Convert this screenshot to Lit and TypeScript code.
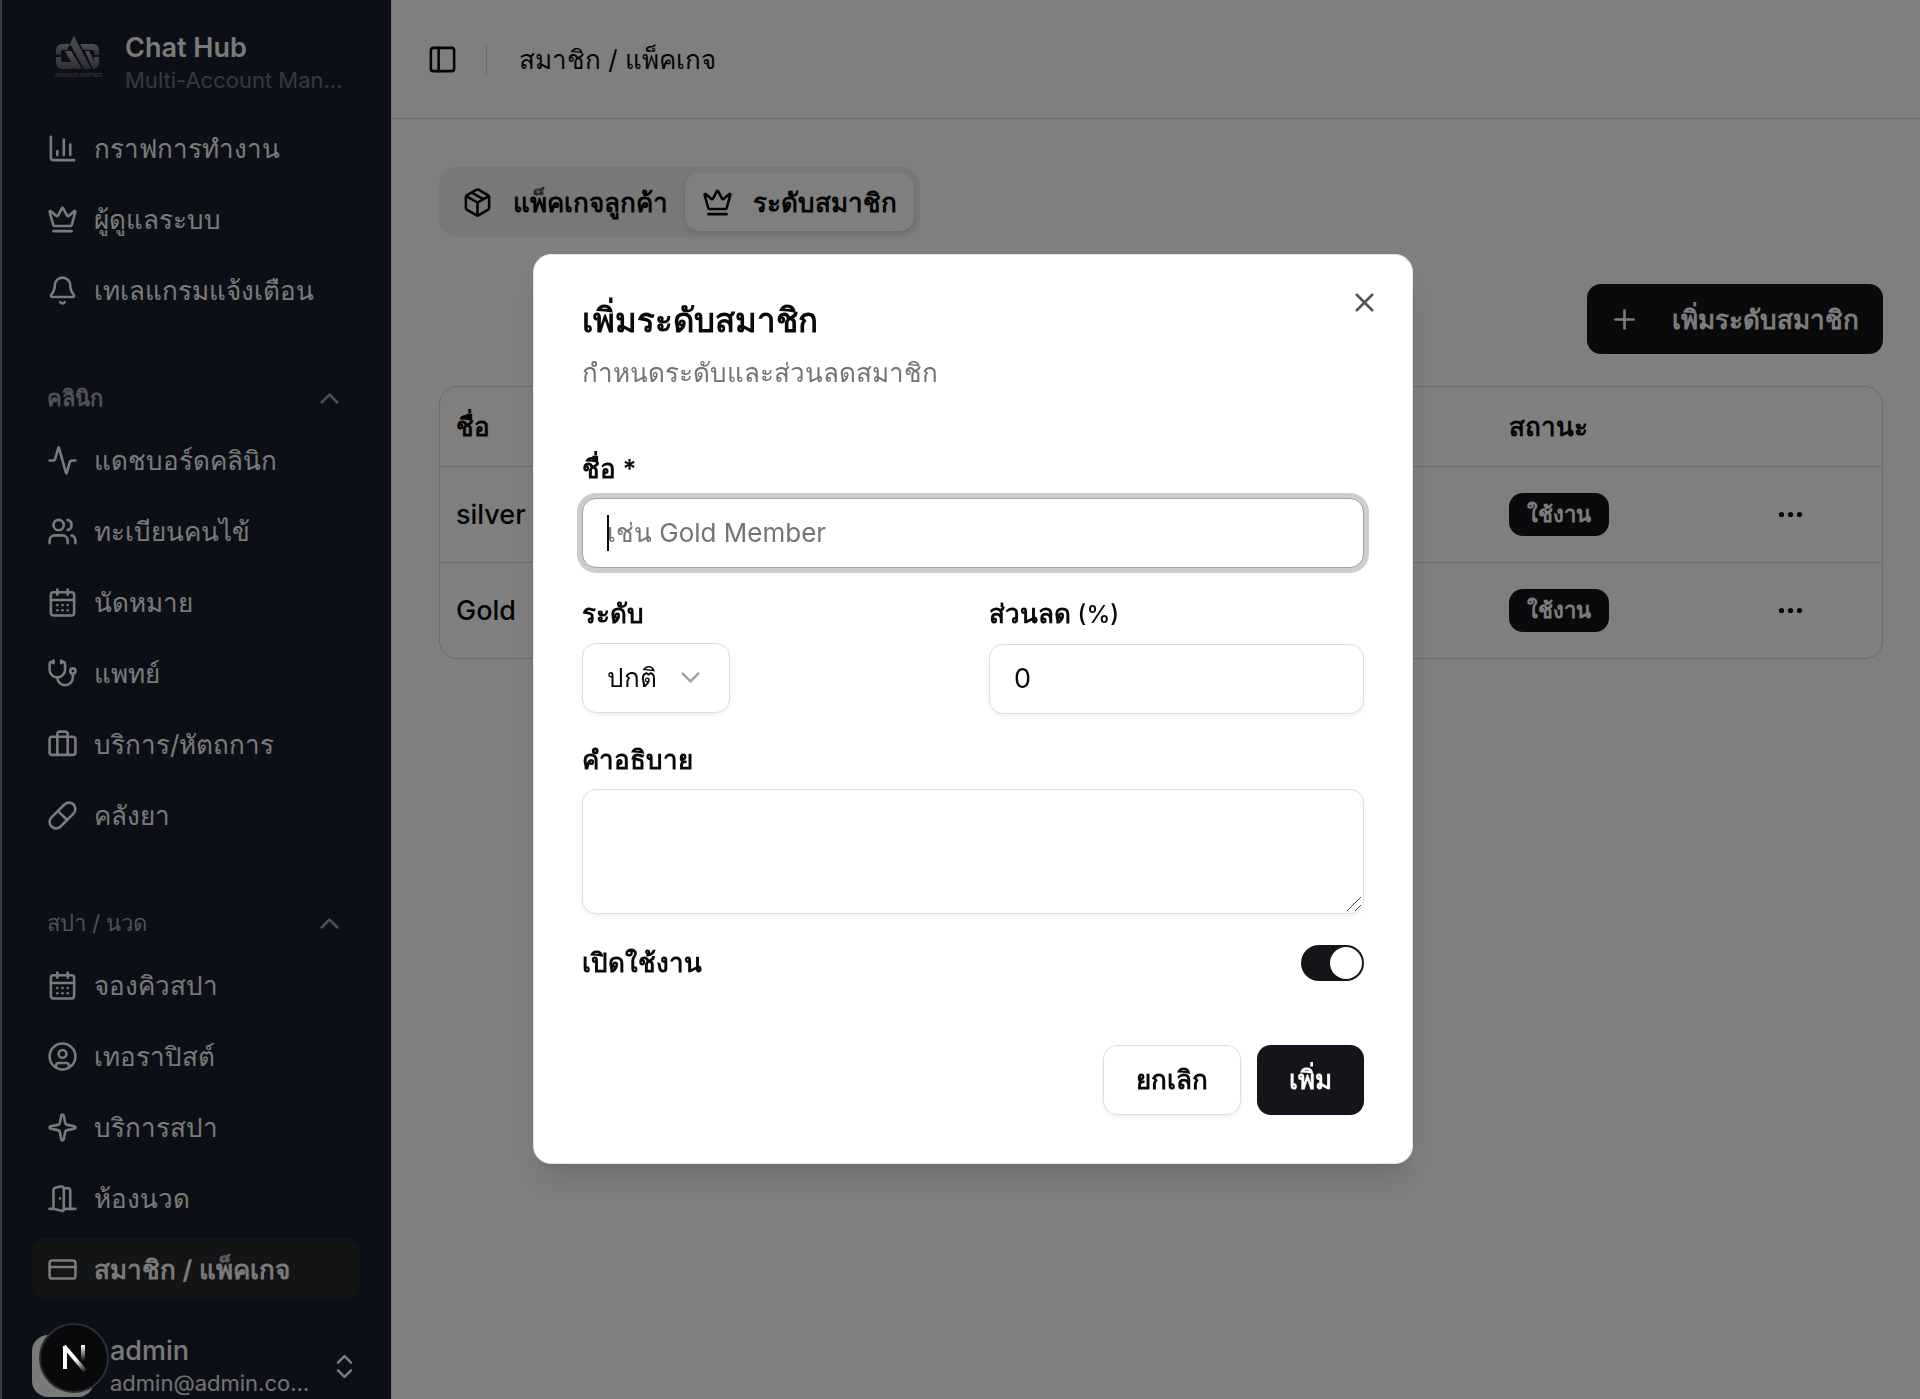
import { LitElement, html, css, svg } from "lit";
import { customElement, property, query, state } from "lit/decorators.js";
import { classMap } from "lit/directives/class-map.js";

const icons = {
  chart: svg`<path d="M3 3v16a2 2 0 0 0 2 2h16"/><path d="M13 17V5"/><path d="M18 17V9"/><path d="M8 17v-3"/>`,
  crown: svg`<path d="M11.562 3.266a.5.5 0 0 1 .876 0L15.39 8.87a1 1 0 0 0 1.516.294L21.183 5.5a.5.5 0 0 1 .798.519l-2.834 10.246a1 1 0 0 1-.956.734H5.81a1 1 0 0 1-.957-.734L2.02 6.02a.5.5 0 0 1 .798-.519l4.276 3.664a1 1 0 0 0 1.516-.294z"/><path d="M5 21h14"/>`,
  bell: svg`<path d="M10.268 21a2 2 0 0 0 3.464 0"/><path d="M3.262 15.326A1 1 0 0 0 4 17h16a1 1 0 0 0 .74-1.673C19.41 13.956 18 12.499 18 8A6 6 0 0 0 6 8c0 4.499-1.411 5.956-2.738 7.326"/>`,
  activity: svg`<path d="M22 12h-2.48a2 2 0 0 0-1.93 1.46l-2.35 8.36a.25.25 0 0 1-.48 0L9.24 2.18a.25.25 0 0 0-.48 0l-2.35 8.36A2 2 0 0 1 4.49 12H2"/>`,
  users: svg`<path d="M16 21v-2a4 4 0 0 0-4-4H6a4 4 0 0 0-4 4v2"/><path d="M16 3.128a4 4 0 0 1 0 7.744"/><path d="M22 21v-2a4 4 0 0 0-3-3.87"/><circle cx="9" cy="7" r="4"/>`,
  calendar: svg`<path d="M8 2v4"/><path d="M16 2v4"/><rect width="18" height="18" x="3" y="4" rx="2"/><path d="M3 10h18"/><path d="M8 14h.01"/><path d="M12 14h.01"/><path d="M16 14h.01"/><path d="M8 18h.01"/><path d="M12 18h.01"/><path d="M16 18h.01"/>`,
  stethoscope: svg`<path d="M11 2v2"/><path d="M5 2v2"/><path d="M5 3H4a2 2 0 0 0-2 2v4a6 6 0 0 0 12 0V5a2 2 0 0 0-2-2h-1"/><path d="M8 15a6 6 0 0 0 12 0v-3"/><circle cx="20" cy="10" r="2"/>`,
  luggage: svg`<path d="M16 20V4a2 2 0 0 0-2-2h-4a2 2 0 0 0-2 2v16"/><rect width="20" height="14" x="2" y="6" rx="2"/>`,
  pill: svg`<path d="m10.5 20.5 10-10a4.95 4.95 0 1 0-7-7l-10 10a4.95 4.95 0 1 0 7 7Z"/><path d="m8.5 8.5 7 7"/>`,
  userRound: svg`<circle cx="12" cy="12" r="10"/><circle cx="12" cy="10" r="3"/><path d="M7 20.662V19a2 2 0 0 1 2-2h6a2 2 0 0 1 2 2v1.662"/>`,
  sparkle: svg`<path d="M11.017 2.814a1 1 0 0 1 1.966 0l1.051 5.558a2 2 0 0 0 1.594 1.594l5.558 1.051a1 1 0 0 1 0 1.966l-5.558 1.051a2 2 0 0 0-1.594 1.594l-1.051 5.558a1 1 0 0 1-1.966 0l-1.051-5.558a2 2 0 0 0-1.594-1.594l-5.558-1.051a1 1 0 0 1 0-1.966l5.558-1.051a2 2 0 0 0 1.594-1.594z"/>`,
  door: svg`<path d="M13 4h3a2 2 0 0 1 2 2v14"/><path d="M2 20h3"/><path d="M13 20h9"/><path d="M10 12v.01"/><path d="M13 4.562v16.157a1 1 0 0 1-1.242.97L5 20V5.562a2 2 0 0 1 1.515-1.94l4-1A2 2 0 0 1 13 4.561Z"/>`,
  card: svg`<rect width="20" height="14" x="2" y="5" rx="2"/><path d="M2 10h20"/>`,
  up: svg`<path d="m18 15-6-6-6 6"/>`,
  down: svg`<path d="m6 9 6 6 6-6"/>`,
  updown: svg`<path d="m7 15 5 5 5-5"/><path d="m7 9 5-5 5 5"/>`,
  panel: svg`<rect width="18" height="18" x="3" y="3" rx="2"/><path d="M9 3v18"/>`,
  box: svg`<path d="M11 21.73a2 2 0 0 0 2 0l7-4A2 2 0 0 0 21 16V8a2 2 0 0 0-1-1.73l-7-4a2 2 0 0 0-2 0l-7 4A2 2 0 0 0 3 8v8a2 2 0 0 0 1 1.73z"/><path d="M12 22V12"/><path d="M3.29 7 12 12l8.71-5"/><path d="m7.5 4.27 9 5.15"/>`,
  plus: svg`<path d="M5 12h14"/><path d="M12 5v14"/>`,
  dots: svg`<circle cx="12" cy="12" r="1"/><circle cx="19" cy="12" r="1"/><circle cx="5" cy="12" r="1"/>`,
  close: svg`<path d="M18 6 6 18"/><path d="m6 6 12 12"/>`,
};
type IconName = keyof typeof icons;

@customElement("ui-icon")
class UiIcon extends LitElement {
  static styles = css`
    :host { display: inline-flex; width: 31px; height: 31px; flex: none; }
    svg { width: 100%; height: 100%; fill: none; stroke: currentColor; stroke-width: 2; stroke-linecap: round; stroke-linejoin: round; }
  `;
  @property() name: IconName = "plus";
  render() {
    return html`<svg viewBox="0 0 24 24" aria-hidden="true">${icons[this.name]}</svg>`;
  }
}

const base = css`
  *, *::before, *::after { box-sizing: border-box; }
  button, input, select, textarea { font: inherit; color: inherit; margin: 0; }
  button { border: 0; background: none; padding: 0; cursor: pointer; }
  a { color: inherit; text-decoration: none; }
`;

interface NavItem { icon: IconName; label: string; active?: boolean }
interface NavGroup { title?: string; strong?: boolean; items: NavItem[] }

const groups: NavGroup[] = [
  {
    items: [
      { icon: "chart", label: "กราฟการทำงาน" },
      { icon: "crown", label: "ผู้ดูแลระบบ" },
      { icon: "bell", label: "เทเลแกรมแจ้งเตือน" },
    ],
  },
  {
    title: "คลินิก",
    strong: true,
    items: [
      { icon: "activity", label: "แดชบอร์ดคลินิก" },
      { icon: "users", label: "ทะเบียนคนไข้" },
      { icon: "calendar", label: "นัดหมาย" },
      { icon: "stethoscope", label: "แพทย์" },
      { icon: "luggage", label: "บริการ/หัตถการ" },
      { icon: "pill", label: "คลังยา" },
    ],
  },
  {
    title: "สปา / นวด",
    items: [
      { icon: "calendar", label: "จองคิวสปา" },
      { icon: "userRound", label: "เทอราปิสต์" },
      { icon: "sparkle", label: "บริการสปา" },
      { icon: "door", label: "ห้องนวด" },
      { icon: "card", label: "สมาชิก / แพ็คเกจ", active: true },
    ],
  },
];

@customElement("app-sidebar")
class AppSidebar extends LitElement {
  static styles = [base, css`
    :host { display: flex; flex-direction: column; overflow: hidden; background: #181e2f; color: #f4f4f5; border-left: 2px solid #7c7c7c; }
    .brand { display: flex; align-items: center; gap: 15px; padding: 31px 30px 22px 46px; }
    .logo { width: 62px; height: 62px; flex: none; padding: 2px 8px 0 4px; }
    .text { min-width: 0; flex: 1; }
    .name, .sub { display: block; white-space: nowrap; }
    .name { font-size: 27px; line-height: 34px; font-weight: 600; }
    .sub { font-size: 22px; line-height: 30px; color: #71717a; }
    .group { padding: 0 31px 0 30px; margin-bottom: 46px; }
    .head { display: flex; width: 100%; align-items: center; justify-content: space-between; height: 62px; padding: 0 15px; font-size: 22px; color: #a1a1aa; }
    .strong { font-weight: 600; }
    .list { list-style: none; margin: 0; padding: 0; display: flex; flex-direction: column; gap: 9px; }
    .item { display: flex; align-items: center; gap: 16px; height: 62px; padding: 0 15px; border-radius: 14px; font-size: 26px; white-space: nowrap; }
    .item.active { background: #27282c; font-weight: 600; }
    .user { display: flex; align-items: center; width: 100%; gap: 16px; padding: 0 31px 0 30px; margin-top: -12px; text-align: left; flex: none; }
    .avatar { width: 62px; height: 62px; border-radius: 16px; background: #f4f4f5; flex: none; }
    .user .name { font-weight: 500; }
    .user .sub { color: #e4e4e7; }
  `];

  private logo() {
    return html`<svg class="logo" viewBox="0 0 50 58" role="img" aria-label="Advisor Partner">
      <defs><linearGradient id="m" x1="0" y1="0" x2="0" y2="1">
        <stop offset="0" stop-color="#a0a0a6"/><stop offset="1" stop-color="#5c5c64"/></linearGradient></defs>
      <g fill="url(#m)">
        <path d="M4 20v-5a6 6 0 0 1 6-6h8l-3 6h-4a2 2 0 0 0-2 2v3z"/>
        <path d="M4 22h5v3a2 2 0 0 0 2 2h8L13 16h6l11 18H10a6 6 0 0 1-6-6z"/>
        <path d="M22 1 18 9l14 25h7l-3-6z"/>
        <path d="M28 9h13a6 6 0 0 1 6 6v5h-5v-3a2 2 0 0 0-2-2h-9z"/>
        <path d="M33 16h4l5 10v-4h5v6a6 6 0 0 1-6 6z"/>
      </g>
      <text x="3" y="42" font-size="5" font-weight="700" fill="#66666c" font-family="Liberation Sans, sans-serif">ADVISOR PARTNER</text>
    </svg>`;
  }

  private group(g: NavGroup) {
    return html`<section class="group">
      ${g.title ? html`<button class=${classMap({ head: true, strong: !!g.strong })} type="button" aria-expanded="true">
        <span>${g.title}</span><ui-icon name="up"></ui-icon>
      </button>` : null}
      <ul class="list">
        ${g.items.map((it) => html`<li><a href="#" class=${classMap({ item: true, active: !!it.active })}>
          <ui-icon name=${it.icon}></ui-icon><span>${it.label}</span></a></li>`)}
      </ul>
    </section>`;
  }

  render() {
    return html`
      <div class="brand">
        ${this.logo()}
        <div class="text"><span class="name">Chat Hub</span><span class="sub">Multi-Account Man…</span></div>
      </div>
      <nav>${groups.map((g) => this.group(g))}</nav>
      <button class="user" type="button">
        <span class="avatar"></span>
        <span class="text"><span class="name">admin</span><span class="sub">admin@admin.co…</span></span>
        <ui-icon name="updown"></ui-icon>
      </button>`;
  }
}

@customElement("members-page")
class MembersPage extends LitElement {
  static styles = [base, css`
    :host { display: block; background: #fff; min-width: 0; border-left: 1px solid #e4e4e7; }
    .top { display: flex; align-items: center; height: 119px; padding: 0 35px; border-bottom: 1px solid #d4d4d8; }
    .toggle { display: flex; }
    .rule { width: 1px; height: 31px; background: #d4d4d8; margin: 0 32px 0 28px; }
    .title { margin: 0; font-size: 26px; font-weight: 400; }
    .body { padding: 48px 37px 48px 47px; }
    .tabs { display: flex; width: fit-content; background: #f0f0f1; padding: 6px; border-radius: 18px; }
    .tab { display: flex; align-items: center; gap: 20px; height: 58px; padding: 0 17px; border-radius: 14px; font-size: 26px; font-weight: 600; }
    .tab.on { background: #fff; box-shadow: 0 2px 4px rgba(0, 0, 0, 0.12); }
    .actions { display: flex; justify-content: flex-end; margin: 47px 0 32px; }
    .add { display: flex; align-items: center; gap: 32px; height: 70px; padding: 0 24px 0 22px; border-radius: 14px; background: #141519; color: #fafafa; font-size: 26px; font-weight: 600; }
    .frame { border: 1px solid #d4d4d8; border-radius: 18px; overflow: hidden; }
    .grid { width: 100%; border-collapse: collapse; table-layout: fixed; font-size: 27px; }
    th, td { text-align: left; padding: 0 16px; }
    th { height: 79px; font-size: 26px; font-weight: 600; }
    td { height: 96px; font-weight: 500; border-top: 1px solid #d4d4d8; }
    .c1 { width: 25%; }
    .c2, .c3 { width: 24%; }
    .c4 { width: 16%; }
    .badge { display: inline-flex; align-items: center; height: 43px; padding: 0 18px; border-radius: 14px; background: #141519; color: #fafafa; font-size: 22px; font-weight: 600; vertical-align: middle; }
    .more { display: flex; margin-left: 36px; }
  `];

  @state() private tab = 1;

  render() {
    const tabs: { icon: IconName; label: string }[] = [
      { icon: "box", label: "แพ็คเกจลูกค้า" },
      { icon: "crown", label: "ระดับสมาชิก" },
    ];
    return html`
      <header class="top">
        <button class="toggle" type="button" aria-label="Toggle Sidebar"><ui-icon name="panel"></ui-icon></button>
        <span class="rule"></span>
        <h1 class="title">สมาชิก / แพ็คเกจ</h1>
      </header>
      <div class="body">
        <div class="tabs" role="tablist">
          ${tabs.map((t, i) => html`<button type="button" role="tab" aria-selected=${i === this.tab}
            class=${classMap({ tab: true, on: i === this.tab })} @click=${() => (this.tab = i)}>
            <ui-icon name=${t.icon}></ui-icon>${t.label}</button>`)}
        </div>
        <div class="actions"><button class="add" type="button"><ui-icon name="plus"></ui-icon>เพิ่มระดับสมาชิก</button></div>
        <div class="frame">
          <table class="grid">
            <thead><tr><th class="c1">ชื่อ</th><th class="c2"></th><th class="c3"></th><th class="c4">สถานะ</th><th></th></tr></thead>
            <tbody>
              ${["silver", "Gold"].map((n) => html`<tr>
                <td>${n}</td><td></td><td></td>
                <td><span class="badge">ใช้งาน</span></td>
                <td><button class="more" type="button" aria-label=${"Actions " + n}><ui-icon name="dots"></ui-icon></button></td>
              </tr>`)}
            </tbody>
          </table>
        </div>
      </div>`;
  }
}

@customElement("level-dialog")
class LevelDialog extends LitElement {
  static styles = [base, css`
    :host { display: block; }
    .panel { position: relative; width: 880px; max-width: 100%; background: #fff; color: #09090b; border: 1px solid #e4e4e7; border-radius: 18px; padding: 48px; box-shadow: 0 20px 30px -6px rgba(0, 0, 0, 0.12), 0 8px 12px -8px rgba(0, 0, 0, 0.12); }
    .close { position: absolute; top: 32px; right: 32px; display: flex; color: #52525b; }
    .title { margin: 0; font-size: 33px; line-height: 34px; font-weight: 600; }
    .desc { margin: 16px 0 0; font-size: 26px; line-height: 39px; color: #737373; }
    .form { display: grid; gap: 31px; padding: 62px 0 64px; font-size: 27px; }
    .field { display: grid; gap: 15px; align-content: start; justify-items: start; min-width: 0; }
    .pair { display: grid; grid-template-columns: 1fr 1fr; gap: 32px; }
    .label { font-size: 26px; line-height: 29px; font-weight: 600; }
    .thin { font-weight: 500; font-size: 24px; }
    .box { display: block; width: 100%; height: 70px; padding: 0 24px; background: #fff; border: 1px solid #dedee0; border-radius: 14px; box-shadow: 0 2px 4px rgba(0, 0, 0, 0.06); outline: none; }
    .wrap { position: relative; display: block; width: 100%; }
    .wrap.fit { width: auto; }
    .name { font-size: 26px; }
    .name:focus { border-color: #a1a1a1; box-shadow: 0 0 0 5px #cdcdcd; caret-color: transparent; }
    .name:focus + .caret { display: block; }
    .caret { display: none; position: absolute; left: 25px; top: 17px; width: 2px; height: 36px; background: #09090b; }
    .name::placeholder { color: #737373; opacity: 1; }
    .select { appearance: none; width: auto; padding-right: 72px; font-size: 26px; }
    .chev { position: absolute; right: 24px; top: 19px; color: #a1a1aa; pointer-events: none; }
    .num { appearance: textfield; }
    .area { height: 125px; padding: 16px 24px; resize: none; }
    .grip { position: absolute; right: 2px; bottom: 2px; width: 16px; height: 16px; fill: none; stroke: #3f3f46; stroke-width: 1; }
    .row { display: flex; align-items: center; justify-content: space-between; }
    .switch { appearance: none; display: flex; align-items: center; width: 63px; height: 36px; margin: 0; padding: 2px; border-radius: 18px; background: #d4d4d8; }
    .switch::before { content: ""; width: 32px; height: 32px; border-radius: 50%; background: #fff; }
    .switch:checked { background: #141519; justify-content: flex-end; }
    .foot { display: flex; justify-content: flex-end; gap: 16px; }
    .btn { height: 70px; padding: 0 32px; border-radius: 14px; font-size: 26px; font-weight: 600; }
    .ghost { border: 1px solid #dedee0; box-shadow: 0 2px 4px rgba(0, 0, 0, 0.06); }
    .solid { background: #141519; color: #fafafa; }
  `];

  @query(".name") private nameInput!: HTMLInputElement;

  firstUpdated() {
    this.nameInput.focus();
  }

  render() {
    return html`<section class="panel" role="dialog" aria-modal="true" aria-labelledby="t" aria-describedby="d">
      <button class="close" type="button" aria-label="Close"><ui-icon name="close"></ui-icon></button>
      <h2 class="title" id="t">เพิ่มระดับสมาชิก</h2>
      <p class="desc" id="d">กำหนดระดับและส่วนลดสมาชิก</p>
      <div class="form">
        <div class="field">
          <label class="label" for="name">ชื่อ *</label>
          <span class="wrap"><input class="box name" id="name" placeholder="เช่น Gold Member" /><span class="caret"></span></span>
        </div>
        <div class="pair">
          <div class="field">
            <label class="label" for="level">ระดับ</label>
            <span class="wrap fit"><select class="box select" id="level"><option>ปกติ</option></select><ui-icon class="chev" name="down"></ui-icon></span>
          </div>
          <div class="field">
            <label class="label" for="disc">ส่วนลด <span class="thin">(%)</span></label>
            <input class="box num" id="disc" type="number" value="0" />
          </div>
        </div>
        <div class="field">
          <label class="label" for="note">คำอธิบาย</label>
          <span class="wrap"><textarea class="box area" id="note"></textarea>
            <svg class="grip" viewBox="0 0 16 16" aria-hidden="true"><path d="M1 15 15 1M9 15l6-6"/></svg></span>
        </div>
        <div class="row">
          <label class="label" for="on">เปิดใช้งาน</label>
          <input class="switch" id="on" type="checkbox" role="switch" checked />
        </div>
      </div>
      <div class="foot">
        <button class="btn ghost" type="button">ยกเลิก</button>
        <button class="btn solid" type="submit">เพิ่ม</button>
      </div>
    </section>`;
  }
}

@customElement("app-root")
class AppRoot extends LitElement {
  static styles = [base, css`
    :host { display: grid; grid-template-columns: 391px minmax(0, 1fr); height: 100vh; overflow: hidden; font-family: Inter, "Noto Sans", sans-serif; color: #09090b; }
    .overlay { position: fixed; inset: 0; display: grid; place-items: center; padding: 18px 0 0 26px; background: rgba(0, 0, 0, 0.5); }
    .dev { position: fixed; left: 39px; bottom: 6px; width: 70px; height: 70px; border-radius: 50%; background: #08090b; border: 2px solid #2c2d33; display: grid; place-items: center; }
    .dev svg { width: 26px; height: 28px; }
  `];

  render() {
    return html`
      <app-sidebar></app-sidebar>
      <members-page></members-page>
      <div class="overlay"><level-dialog></level-dialog></div>
      <button class="dev" type="button" aria-label="Open Next.js Dev Tools">
        <svg viewBox="0 0 26 28" fill="none" stroke-width="4">
          <defs>
            <linearGradient id="a" x1="0" y1="0" x2="0" y2="1" gradientUnits="objectBoundingBox"><stop offset="0" stop-color="#fff"/><stop offset="1" stop-color="#fff" stop-opacity="0"/></linearGradient>
            <linearGradient id="b" x1="14" y1="16" x2="25" y2="28" gradientUnits="userSpaceOnUse"><stop offset="0" stop-color="#fff"/><stop offset="1" stop-color="#fff" stop-opacity="0"/></linearGradient>
          </defs>
          <path d="M4 25V2" stroke="#fff"/>
          <path d="M3 2 25 28" stroke="url(#b)"/>
          <rect x="20" y="1" width="4" height="16" fill="url(#a)"/>
        </svg>
      </button>`;
  }
}
